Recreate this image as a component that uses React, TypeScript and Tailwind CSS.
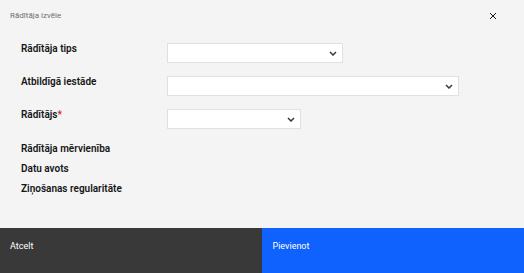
import React from 'react';

const Chevron = () => (
  <svg width="8" height="5" viewBox="0 0 8 5" className="text-[#393939]">
    <path d="M1 1l3 3 3-3" fill="none" stroke="currentColor" strokeWidth="1.5" />
  </svg>
);

const CloseIcon = () => (
  <svg width="8" height="8" viewBox="0 0 8 8" className="text-[#161616]">
    <path d="M1 1l6 6M7 1L1 7" fill="none" stroke="currentColor" strokeWidth="1" />
  </svg>
);

const SelectBox = ({ width }: { width: string }) => (
  <div className={`${width} h-[20px] bg-white border border-[#e0e0e0] flex items-center justify-end pr-[5px]`}>
    <Chevron />
  </div>
);

const fields = [
  { label: 'Rādītāja tips', width: 'w-[176px]' },
  { label: 'Atbildīgā iestāde', width: 'w-[292px]' },
  { label: 'Rādītājs', width: 'w-[134px]', required: true },
];

const infoRows = ['Rādītāja mērvienība', 'Datu avots', 'Ziņošanas regularitāte'];

export default function App() {
  return (
    <div
      className="w-[524px] h-[273px] bg-[#f4f4f4] flex flex-col"
      style={{ fontFamily: 'Roboto, "Liberation Sans", sans-serif' }}
    >
      <div className="flex items-center justify-between pl-[10px] pr-[27px] pt-[10px] h-[22px]">
        <span className="text-[8px] text-[#6f6f6f]">Rādītāja izvēle</span>
        <CloseIcon />
      </div>

      <div className="flex-1 pl-[21px] pt-[21px]">
        <div className="flex flex-col gap-[13px]">
          {fields.map(f => (
            <div key={f.label} className="flex items-start">
              <div className="w-[146px] text-[10px] font-semibold text-[#161616] leading-[12px] pt-[0px]">
                {f.label}
                {f.required && <span className="text-[#da1e28]">*</span>}
              </div>
              <SelectBox width={f.width} />
            </div>
          ))}
        </div>
        <div className="flex flex-col mt-[14px]">
          {infoRows.map(r => (
            <div key={r} className="h-[20px] text-[10px] font-semibold text-[#161616] leading-[12px]">
              {r}
            </div>
          ))}
        </div>
      </div>

      <div className="flex h-[45px]">
        <div className="flex-1 bg-[#393939] text-white text-[9px] pl-[10px] pt-[12px]">Atcelt</div>
        <div className="flex-1 bg-[#0f62fe] text-white text-[9px] pl-[11px] pt-[12px]">Pievienot</div>
      </div>
    </div>
  );
}
